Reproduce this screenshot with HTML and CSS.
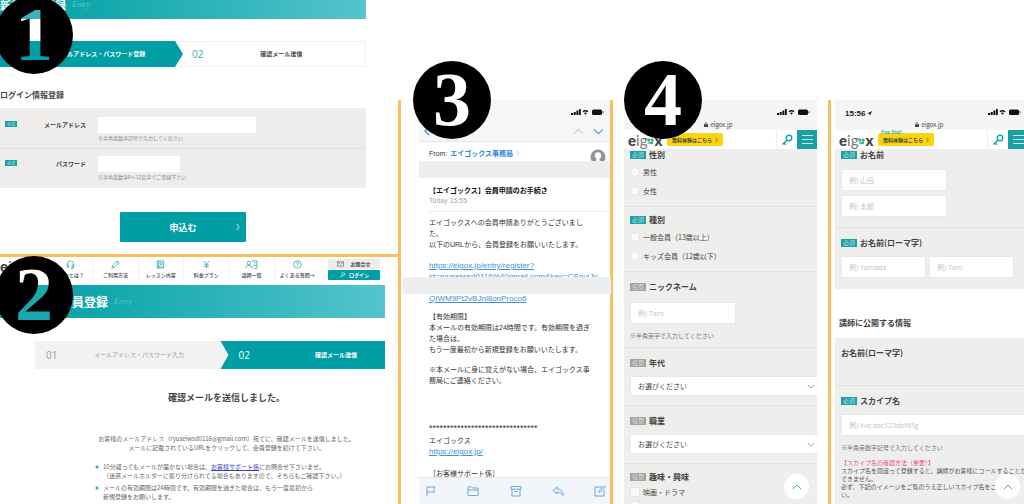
FILE: index.html
```html
<!DOCTYPE html>
<html lang="ja">
<head>
<meta charset="utf-8">
<title>エイゴックス 会員登録の流れ</title>
<link rel="stylesheet" href="styles.css">
</head>
<body>
<svg class="defs" aria-hidden="true">
  <symbol id="status" viewBox="0 0 34 8">
    <path d="M1 5h2v2H1zM3.7 4h2v3h-2zM6.4 2.600h2V7h-2zM9 1h1.800v6H9z"/>
    <path d="M12.500 3.200q3-2.400 6 0l-1 1.100q-2-1.500-4 0zM14 4.900q1.500-1 3 0L15.500 6.800z"/>
    <rect x="22" y="1.500" width="10" height="5.500" rx="1.500"/><path d="M32.600 3.200h.8v2h-.8z"/>
  </symbol>
  <symbol id="lock" viewBox="0 0 4 5"><path d="M0 2.200h4V5H0z"/><path d="M1 2.500V1.500a1 1 0 0 1 2 0v1" fill="none" stroke="currentColor" stroke-width=".6"/></symbol>
  <symbol id="key" viewBox="0 0 12 12"><g fill="none" stroke="currentColor" stroke-width="1.300"><circle cx="8" cy="4" r="2.800"/><path d="M6 6L1.500 10.500M3 9l1.700 1.700"/></g></symbol>
  <symbol id="up" viewBox="0 0 10 6"><path d="M1 5l4-4 4 4" fill="none" stroke="currentColor"/></symbol>
  <symbol id="down" viewBox="0 0 10 6"><path d="M1 1l4 4 4-4" fill="none" stroke="currentColor"/></symbol>
  <symbol id="ring" viewBox="0 0 6 6"><circle cx="1.500" cy="1.800" r="1.300" fill="#27b36a"/><circle cx="4.500" cy="1.800" r="1.300" fill="#18a8b0"/><circle cx="2.200" cy="4.200" r="1.200" fill="#7cc36b"/><circle cx="4" cy="4.200" r="1.200" fill="#18a8b0"/></symbol>
</svg>

<main class="board">
  <div class="col-web">
    <section class="web web--entry">
      <span class="num num--1">1</span>
      <header class="banner banner--cut"><h1>新規会員登録</h1><i>Entry</i></header>
      <ol class="steps steps--first">
        <li class="step step--on step--tip"><b>01</b><span>メールアドレス・パスワード登録</span></li>
        <li class="step step--next"><b>02</b><span>確認メール送信</span></li>
      </ol>
      <h2 class="login-title">ログイン情報登録</h2>
      <form class="login">
        <div class="login-row">
          <span class="tag">必須</span><label for="mail">メールアドレス</label>
          <div><input id="mail" class="w-mail" type="email"><p>※半角英数字記号で入力してください</p></div>
        </div>
        <div class="login-row">
          <span class="tag">必須</span><label for="pass">パスワード</label>
          <div><input id="pass" class="w-pass" type="password"><p>※半角英数字6〜12文字でご登録下さい</p></div>
        </div>
        <button class="apply" type="submit"><span>申込む</span><svg viewBox="0 0 4 8"><path d="M.7 1l2.500 3L.7 7" fill="none" stroke="currentColor" stroke-width=".8"/></svg></button>
      </form>
    </section>

    <section class="web web--sent">
      <span class="num num--2">2</span>
      <header class="site">
        <span class="logo"><b>e</b>ig<svg><use href="#ring"/></svg><b>x</b></span>
        <nav class="nav">
          <a href="#"><svg viewBox="0 0 10 10"><path d="M1.500 6V4.500a3.500 3.500 0 0 1 7 0V6M1.500 5.500h1.700v2.700H1.500zM6.800 5.500h1.700v2.700H6.800zM8.500 8q0 1.500-3 1.500"/></svg>eigoxとは？</a>
          <a href="#"><svg viewBox="0 0 10 10"><path d="M1 9l.6-2.600L7 1l2 2-5.400 5.400zM6 2l2 2M2 6.500l1.500 1.500"/></svg>ご利用方法</a>
          <a href="#"><svg viewBox="0 0 10 10"><path d="M1.500 1h7v8h-7zM3 1v8M4.500 3h2.500v2H4.500zM1.500 7.500h7"/></svg>レッスン内容</a>
          <a href="#"><svg viewBox="0 0 10 10"><path d="M2 1l3 4 3-4M5 5v4.500M2.500 5.300h5M2.500 7.200h5"/></svg>料金プラン</a>
          <a href="#"><svg class="wide" viewBox="0 0 14 10"><circle cx="4" cy="3.300" r="2"/><path d="M.7 9q0-3.200 3.300-3.200T7.300 9M7 1h6v5H9.500L8 7.500M9.500 3h2M13 6v3.300H9"/></svg>講師一覧</a>
          <a href="#"><svg viewBox="0 0 10 10"><circle cx="5" cy="5" r="4.200"/><path d="M3.600 4q0-1.500 1.400-1.500T6.400 4Q6.400 4.700 5 5.500v.7M5 7v.8"/></svg>よくある質問→</a>
        </nav>
        <div class="site-btns">
          <a class="ask" href="#"><svg viewBox="0 0 8 6"><path d="M.5.5h7v5h-7zl3.500 3 3.500-3" fill="none" stroke="currentColor" stroke-width=".6"/></svg>お問合せ</a>
          <a class="signin" href="#"><svg viewBox="0 0 12 12"><use href="#key"/></svg>ログイン</a>
        </div>
      </header>
      <header class="banner"><h1>新規会員登録</h1><i>Entry</i></header>
      <ol class="steps steps--second">
        <li class="step step--off"><b>01</b><span>メールアドレス・パスワード入力</span></li>
        <li class="step step--on step--notch"><b>02</b><span>確認メール送信</span></li>
      </ol>
      <h2 class="sent-title">確認メールを送信しました。</h2>
      <p class="sent-text">お客様のメールアドレス（ryuseiwsd0116@gmail.com）宛てに、確認メールを送信しました。<br>メールに記載されているURLをクリックして、会員登録を続けて下さい。</p>
      <ul class="tips">
        <li>10分経ってもメールが届かない場合は、<a href="#">お客様サポート係</a>にお問合せ下さいませ。<br>（迷惑メールホルダーに振り分けられてる場合もありますので、そちらもご確認下さい。）</li>
        <li>メールの有効期限は24時間です。有効期限を過ぎた場合は、もう一度最初から<br>新規登録をお願いします。</li>
      </ul>
    </section>
  </div>

  <section class="col-mail">
    <span class="num num--3">3</span>
    <div class="mail">
      <header class="mail-top">
        <svg class="status"><use href="#status"/></svg>
        <div class="mail-nav">
          <button class="back" aria-label="戻る"><svg viewBox="0 0 6 10"><path d="M5 1L1 5l4 4" fill="none" stroke="currentColor" stroke-width="1.500"/></svg></button>
          <button class="prev" aria-label="前へ"><svg><use href="#up"/></svg></button>
          <button aria-label="次へ"><svg><use href="#down"/></svg></button>
        </div>
      </header>
      <div class="from"><span>From:</span><a href="#">エイゴックス事務局</a><svg class="more" viewBox="0 0 4 8"><path d="M.7 1l2.500 3L.7 7" fill="none" stroke="currentColor" stroke-width=".8"/></svg>
        <svg class="face" viewBox="0 0 16 16"><circle cx="8" cy="8" r="7.500" fill="#8f949c"/><circle cx="8" cy="6.500" r="3.200" fill="#fff"/><path d="M6.500 9h3v2.500l3 1.500v2q-4.500 2-9 0v-2l3-1.500z" fill="#fff"/></svg>
      </div>
      <div class="band"></div>
      <div class="subject"><h2>【エイゴックス】会員申請のお手続き</h2><time>Today 15:55</time></div>
      <div class="letter">
        <p>エイゴックスへの会員申請ありがとうございまし<br>た。<br>以下のURLから、会員登録をお願いいたします。</p>
        <p class="url"><a href="#">https://eigox.jp/entry/register?<br>id=ryuseiwsd0116%40gmail.com&amp;key=CSnuiJy<br><br>QIWM9Pt2vBJnl8onProco6</a></p>
        <p>【有効期限】<br>本メールの有効期限は24時間です。有効期限を過ぎ<br>た場合は、<br>もう一度最初から新規登録をお願いいたします。</p>
        <p>※本メールに身に覚えがない場合、エイゴックス事<br>務局にご連絡ください。</p>
        <p class="stars">*******************************</p>
        <p class="sign">エイゴックス<br><a href="#">https://eigox.jp/</a></p>
        <p>［お客様サポート係］</p>
      </div>
      <footer class="tools">
        <button aria-label="フラグ"><svg viewBox="0 0 12 12"><path d="M2 11V2h8L8.500 4.500 10 7H2"/></svg></button>
        <button aria-label="フォルダ"><svg viewBox="0 0 12 12"><path d="M1 2.500q0-.7.700-.7H4.500l1 1.200h5q.7 0 .7.700V9.800q0 .7-.7.700H1.700Q1 10.500 1 9.800zM1 5h10.200"/></svg></button>
        <button aria-label="アーカイブ"><svg viewBox="0 0 12 12"><path d="M1 1.500h10v2.700H1zM2 4.200V11h8V4.200M4.300 6.500h3.400"/></svg></button>
        <button aria-label="返信"><svg viewBox="0 0 12 12"><path d="M5 2L.8 5.500 5 9V7q4 0 6.300 3.500Q11 4.200 5 4z"/></svg></button>
        <button aria-label="作成"><svg viewBox="0 0 12 12"><path d="M8 2H1v9h9V5M5 7.500l.3-1.800L10.200.8l1.200 1.200-4.900 4.900z"/></svg></button>
      </footer>
    </div>
    <div class="band band--key"></div>
  </section>

  <section class="col-phone col-phone--line">
    <span class="num num--4">4</span>
    <div class="phone">
      <header class="phone-top"><time></time><svg class="status"><use href="#status"/></svg><span><svg><use href="#lock"/></svg>eigox.jp</span></header>
      <div class="phone-bar">
        <span class="logo"><b>e</b>ig<svg><use href="#ring"/></svg><b>x</b></span>
        <a class="trial" href="#">無料体験はこちら<svg viewBox="0 0 4 8"><path d="M.7 1l2.500 3L.7 7" fill="none" stroke="currentColor" stroke-width=".8"/></svg></a>
        <a class="keylink" href="#" aria-label="ログイン"><svg><use href="#key"/></svg></a>
        <button class="menu" aria-label="メニュー"><i></i><i></i><i></i></button>
      </div>
      <form>
        <div class="field field--top" role="radiogroup" aria-labelledby="g1">
          <h3 id="g1"><span class="tag">必須</span>性別</h3>
          <div class="choices"><label><input type="radio" name="sex">男性</label><label><input type="radio" name="sex">女性</label></div>
        </div>
        <div class="field field--choice" role="radiogroup" aria-labelledby="g2">
          <h3 id="g2"><span class="tag">必須</span>種別</h3>
          <div class="choices"><label><input type="radio" name="kind">一般会員（13歳以上）</label><label><input type="radio" name="kind">キッズ会員（12歳以下）</label></div>
        </div>
        <div class="field">
          <h3><span class="tag tag--any">任意</span><label for="nick">ニックネーム</label></h3>
          <div class="inputs"><input id="nick" class="w-name" placeholder="例) Taro"></div>
          <p class="note">※半角英字で入力してください</p>
        </div>
        <div class="field field--select">
          <h3><span class="tag tag--any">任意</span><label for="age">年代</label></h3>
          <div class="pick"><select id="age"><option>お選びください</option></select><svg><use href="#down"/></svg></div>
        </div>
        <div class="field field--select">
          <h3><span class="tag tag--any">任意</span><label for="job">職業</label></h3>
          <div class="pick"><select id="job"><option>お選びください</option></select><svg><use href="#down"/></svg></div>
        </div>
        <div class="field field--choice">
          <h3><span class="tag tag--any">任意</span>趣味・興味</h3>
          <div class="choices choices--tick"><label><input type="checkbox">映画・ドラマ</label><label><input type="checkbox" aria-label="その他"></label></div>
        </div>
      </form>
      <a class="totop" href="#" aria-label="先頭へ"><svg><use href="#up"/></svg></a>
    </div>
  </section>

  <section class="col-phone">
    <div class="phone phone--over">
      <header class="phone-top"><time>15:56 <svg viewBox="0 0 6 6"><path d="M0 3L6 0 3.500 6 3 3.200z"/></svg></time><svg class="status"><use href="#status"/></svg><span><svg><use href="#lock"/></svg>eigox.jp</span></header>
      <div class="phone-bar">
        <span class="logo"><b>e</b>ig<svg><use href="#ring"/></svg><b>x</b></span>
        <a class="trial" href="#"><i>Free Trial!</i>無料体験はこちら<svg viewBox="0 0 4 8"><path d="M.7 1l2.500 3L.7 7" fill="none" stroke="currentColor" stroke-width=".8"/></svg></a>
        <a class="keylink" href="#" aria-label="ログイン"><svg><use href="#key"/></svg></a>
        <button class="menu" aria-label="メニュー"><i></i><i></i><i></i></button>
      </div>
      <form>
        <div class="field field--top field--names">
          <h3><span class="tag">必須</span><label for="sei">お名前</label></h3>
          <div class="inputs inputs--stack"><input id="sei" class="w-name" placeholder="例) 山田"><input class="w-name" aria-label="名" placeholder="例) 太郎"></div>
        </div>
        <div class="field field--last">
          <h3><span class="tag">必須</span><label for="rsei">お名前(ローマ字)</label></h3>
          <div class="inputs"><input id="rsei" placeholder="例) Yamada"><input aria-label="名(ローマ字)" placeholder="例) Taro"></div>
        </div>
        <h2 class="public">講師に公開する情報</h2>
        <div class="field field--blank"><h3>お名前(ローマ字)</h3></div>
        <div class="field field--skype">
          <h3><span class="tag">必須</span><label for="skype">スカイプ名</label></h3>
          <div class="inputs"><input id="skype" placeholder="例) live:abc123def45g"></div>
          <p class="note">※半角英数字記号で入力してください</p>
          <p class="help"><em>【スカイプ名の確認方法（重要）】</em><br>スカイプ名を間違って登録すると、講師がお客様にコールすることが<br>できません。<br>必ず、下記のイメージをご覧のうえ正しいスカイプ名をご<br>い。</p>
        </div>
      </form>
      <a class="totop" href="#" aria-label="先頭へ"><svg><use href="#up"/></svg></a>
    </div>
  </section>
</main>
</body>
</html>
```
FILE: styles.css
```css
* { box-sizing: border-box; margin: 0; padding: 0; }
:root { --teal: #009fa6; --orange: #fbbd62; --form: #eeeeec; }
body {
  font-family: "Noto Sans CJK JP", sans-serif;
  color: #444;
  background: #fff;
  overflow: hidden;
}
ol, ul { list-style: none; }
i, em { font-style: normal; }
a { color: inherit; text-decoration: none; }
button, input, select { font: inherit; color: inherit; border: 0; background: none; appearance: none; }
svg { display: block; fill: currentColor; flex: none; }
.defs { position: absolute; width: 0; height: 0; }

.board {
  display: grid;
  grid-template-columns: 398fr 215fr 218fr 193fr;
  height: 100vh;
  overflow: hidden;
}
.board > * { min-width: 0; }

/* numbered discs */
.num {
  position: absolute;
  z-index: 5;
  width: 78px;
  height: 78px;
  border-radius: 50%;
  background: #000;
  font: bold 76px/76px "Liberation Serif", serif;
  text-align: center;
  color: #fff;
}
.num--1, .num--2 { color: transparent; -webkit-text-fill-color: transparent; }
.num--1 {
  top: -4px; left: -5px;
  background: linear-gradient(#3bb4b9 23px, #fff 23px 45px, var(--teal) 45px) text, #000;
}
.num--2 {
  top: -1px; left: -5px;
  background: linear-gradient(#fff 29px, #17a9ae 29px) text, #000;
}
.num--3 { top: -39px; left: 12px; }
.num--4 { top: -39px; left: 11px; }

/* web pages on the left */
.web { position: relative; }
.web--entry { height: 257px; border-bottom: 3px solid var(--orange); padding-right: 32px; overflow: hidden; }
.web--sent { padding-right: 13px; }
.banner {
  display: flex;
  align-items: center;
  gap: 6px;
  height: 33px;
  padding-left: 36px;
  color: #fff;
  background: linear-gradient(90deg, #0fa7ac 25%, #55c4cc);
}
.banner h1 { font-size: 12px; line-height: 16px; }
.banner i { font: italic 8px/10px "Liberation Serif", serif; color: #5cc5ca; }
.banner--cut { height: 19px; padding: 0 0 10px; }
.banner--cut h1 { font-size: 11px; }

.steps { display: flex; font-size: 6px; line-height: 10px; }
.step { display: flex; align-items: center; }
.step b { font: 10px/12px "Open Sans", sans-serif; }
.step span { flex: 1; text-align: center; }
.step--on { background: var(--teal); color: #fff; font-weight: 700; }
.steps--first { height: 26px; margin-top: 22px; }
.step--tip { flex: 0 0 50%; padding: 0 4px 0 10px; clip-path: polygon(0 0, calc(100% - 8px) 0, 100% 50%, calc(100% - 8px) 100%, 0 100%); }
.step--next { flex: 1; margin-left: -8px; padding: 0 16px; border: 1px solid #f1f1f1; font-weight: 700; }
.step--next b { color: #35aeb3; }
.step--next span { padding-left: 10px; }
.steps--second { height: 28px; margin: 23px 0 0 35px; }
.step--off { flex: 1; margin-right: -8px; padding: 0 8px 0 11px; background: #f2f2f2; color: #999; }
.step--notch { flex: 0 0 47%; padding: 0 18px; clip-path: polygon(0 0, 100% 0, 100% 100%, 0 100%, 8px 50%); }
.step--notch span { text-align: right; padding-right: 10px; }

.login-title { margin-top: 22px; font-size: 8px; line-height: 12px; font-weight: 700; margin-bottom: 7px; }
.login { display: flex; flex-direction: column; }
.login-row {
  display: grid;
  grid-template-columns: 12px 69px 1fr;
  height: 40px;
  padding: 9px 0 0 5px;
  background: #eeedec;
  font-size: 6px;
}
.login-row + .login-row { border-top: 1px solid #e2e2e1; padding-top: 7px; }
.login-row > label { text-align: right; line-height: 15px; font-weight: 700; }
.login-row > div { padding-left: 12px; }
.login-row input { display: block; height: 16px; background: #fff; }
.login-row p { font-size: 5px; line-height: 8px; margin-top: 1px; color: #888; }
.login-row .tag { width: 12px; height: 6px; line-height: 6px; font-size: 4px; margin-top: 4px; }
.w-mail { width: 158px; }
.w-pass { width: 82px; }
.tag {
  display: inline-block;
  width: 16px;
  height: 8px;
  background: #1a9fa5;
  color: #b5e2e4;
  font-size: 6px;
  line-height: 8px;
  font-weight: 400;
  text-align: center;
}
.tag--any { background: #a3a3a2; color: #ddd; }
.apply {
  display: flex;
  align-items: center;
  align-self: center;
  width: 126px;
  height: 30px;
  margin-top: 24px;
  padding: 0 6px 0 10px;
  border-radius: 1px;
  background: var(--teal);
  color: #fff;
  font-size: 9px;
  font-weight: 700;
}
.apply span { flex: 1; }
.apply svg { width: 4px; height: 8px; }

.logo { display: flex; align-items: center; font: 15px/18px Lato, sans-serif; color: #777; }
.logo b { color: #444; font-weight: 900; }
.logo svg { width: 7px; height: 7px; margin-top: 3px; }
.site { display: flex; align-items: flex-start; height: 28px; padding-right: 5px; gap: 8px; }
.site .logo { flex: 0 0 40px; }
.nav { flex: 1; display: grid; grid-template-columns: repeat(6, 1fr); font-size: 5px; line-height: 8px; font-weight: 500; }
.nav a { display: flex; flex-direction: column; align-items: center; gap: 2px; height: 25px; padding-top: 3px; border-right: 1px solid #f3f3f3; white-space: nowrap; }
.nav a:last-child { border: 0; }
.nav svg { width: 9px; height: 9px; fill: none; stroke: #36aeb3; stroke-width: .9; }
.nav .wide { width: 13px; }
.site-btns { flex: 0 0 52px; display: flex; flex-direction: column; gap: 1px; padding-top: 2px; font-size: 5px; line-height: 10px; }
.site-btns a { display: flex; justify-content: center; align-items: center; gap: 6px; height: 10px; border-radius: 1px; font-weight: 700; }
.site-btns svg { width: 7px; height: 6px; }
.site-btns .signin { gap: 3px; }
.ask { background: #efedec; }
.signin { background: var(--teal); color: #fff; }

.sent-title { margin: 22px 0 0 68px; text-align: center; font-size: 9px; line-height: 14px; }
.sent-text { margin: 29px 0 0 68px; text-align: center; font-size: 6px; line-height: 9px; color: #666; white-space: nowrap; }
.tips { margin: 10px 0 0 95px; font-size: 6px; line-height: 9px; color: #666; white-space: nowrap; }
.tips li { padding-left: 8px; margin-bottom: 3px; background: radial-gradient(circle at 2px 5px, #36aeb3 1px, transparent 2px); }
.tips a { color: #3a3ac0; text-decoration: underline; }

/* mail */
.col-mail { position: relative; margin-top: 100px; padding-left: 18px; border: solid var(--orange); border-width: 0 3px; }
.mail { display: flex; flex-direction: column; height: calc(100vh - 100px); font-family: "Liberation Sans", "Noto Sans CJK JP", sans-serif; font-size: 7px; line-height: 11px; color: #333; white-space: nowrap; overflow: hidden; }
.mail-top { flex: none; height: 42px; padding: 8px 6px 0 5px; background: #f6f6f7; border-bottom: 1px solid #e6e6e8; }
.status { width: 34px; height: 8px; margin-left: auto; color: #111; }
.mail-nav { display: flex; align-items: center; gap: 9px; height: 14px; margin-top: 8px; color: #4d9be8; }
.mail-nav .back { margin-right: auto; }
.mail-nav .prev { color: #ccc; }
.mail-nav svg { width: 11px; height: 7px; }
.mail-nav .back svg { height: 10px; width: 6px; }
.from { flex: none; display: flex; align-items: center; height: 19px; padding: 4px 4px 0 10px; overflow: hidden; gap: 3px; }
.from a { color: #2f86e0; font-weight: 700; }
.from .more { width: 4px; height: 7px; color: #bbb; }
.from .face { width: 16px; height: 16px; margin: 3px 0 0 auto; align-self: flex-start; }
.band { flex: none; height: 17px; background: #eceef0; }
.band--key { position: absolute; top: 177px; left: 2px; right: -1px; }
.subject { flex: none; margin: 0 0 0 10px; padding: 7px 0 5px; border-bottom: 1px solid #ececec; }
.subject h2 { font-size: 7px; line-height: 11px; color: #111; }
.subject time { display: block; line-height: 10px; color: #aaa; }
.letter { flex: 1; min-height: 0; overflow: hidden; padding: 5px 0 0 10px; }
.letter p { margin-bottom: 9px; }
.letter a { color: #3f8fdb; text-decoration: underline; font-size: 8px; }
.letter .url { font-size: 8px; margin-bottom: 7px; margin-top: 10px; }
.letter .stars { font-size: 9px; margin: 37px 0 1px; line-height: 11px; }
.letter .sign { margin-bottom: 11px; }
.tools { flex: none; display: flex; justify-content: space-between; align-items: center; height: 27px; padding: 0 4px 0 6px; background: #f2f5fa; border-top: 1px solid #e5e8ec; }
.tools svg { width: 12px; height: 12px; fill: none; stroke: #5c9fdc; stroke-width: .9; }

/* phones */
.col-phone { position: relative; margin-top: 100px; padding-left: 4px; }
.col-phone--line { padding: 0 11px; border-right: 3px solid var(--orange); }
.phone { position: relative; height: calc(100vh - 100px); background: var(--form); overflow: hidden; }
.phone--over { margin-right: -4px; }
.phone-top { display: grid; grid-template-columns: 1fr auto; height: 30px; padding: 8px 7px 0 10px; background: #f5f5f5; font-size: 6px; }
.phone-top time { display: flex; gap: 2px; align-items: center; font: bold 8px/9px "Liberation Sans", sans-serif; color: #222; }
.phone-top time svg { width: 5px; height: 5px; }
.phone-top span { grid-column: 1 / 3; display: flex; justify-content: center; align-items: center; gap: 3px; padding-right: 8px; font-family: "Noto Sans CJK JP", sans-serif; line-height: 8px; color: #444; }
.phone-top span svg { width: 4px; height: 5px; }
.phone-bar { display: flex; align-items: center; height: 19px; padding-left: 4px; background: #fff; }
.phone-bar .logo { width: 39px; }
.trial { position: relative; display: flex; justify-content: center; align-items: center; gap: 3px; width: 56px; height: 13px; border-radius: 2px; background: #fbd40f; font-size: 5px; line-height: 13px; font-weight: 700; white-space: nowrap; }
.trial svg { width: 3px; height: 6px; }
.trial i { position: absolute; top: -3px; left: 3px; font: italic bold 5px/5px Lato, sans-serif; color: #2aa7a0; }
.keylink { display: flex; justify-content: center; align-items: center; width: 21px; height: 19px; margin-left: auto; border-left: 1px solid #eee; color: var(--teal); }
.keylink svg { width: 12px; height: 12px; }
.menu { display: flex; flex-direction: column; justify-content: center; align-items: center; gap: 3px; width: 20px; height: 19px; background: #18a0a5; }
.menu i { width: 11px; height: 1px; background: #c5e8e9; }

.field { padding: 10px 7px 6px 6px; border-bottom: 1px solid #e2e2e0; }
.field h3 { display: flex; align-items: center; gap: 3px; height: 10px; font-size: 8px; line-height: 10px; white-space: nowrap; }
.field--top { padding-top: 1px; }
.field--choice { padding-top: 8px; }
.choices { margin-top: 2px; font-size: 7px; line-height: 10px; }
.choices label { display: flex; align-items: center; gap: 3px; height: 19px; }
.choices input { width: 10px; height: 10px; border-radius: 50%; background: #fafafa; border: 1px solid #e4e4e3; }
.choices--tick { margin-top: 3px; }
.choices--tick label { height: 14px; }
.choices--tick input { border-radius: 0; }
.inputs { display: flex; gap: 3px; margin-top: 10px; }
.inputs input { flex: 1; min-width: 0; height: 22px; padding: 0 7px; background: #fff; border: 1px solid #e8e8e7; font: 7px "Open Sans", "Noto Sans CJK JP", sans-serif; }
.inputs input::placeholder { color: #c4c4c4; }
.inputs .w-name { flex: none; width: 106px; }
.inputs--stack { flex-direction: column; gap: 4px; margin-top: 9px; }
.note { margin-top: 7px; font-size: 6px; line-height: 10px; color: #777; }
.field--select { padding-right: 0; padding-bottom: 9px; }
.pick { display: grid; align-items: center; margin-top: 8px; background: #fff; border: 1px solid #e8e8e7; border-right: 0; }
.pick > * { grid-area: 1 / 1; }
.pick select { height: 18px; padding: 0 7px; font-size: 7px; line-height: 16px; }
.pick svg { width: 8px; height: 5px; margin: 0 2px 0 auto; color: #888; pointer-events: none; }
.field--names { padding-bottom: 10px; }
.field--last { padding-bottom: 11px; padding-right: 14px; border: 0; }
.field--last .inputs, .field--skype .inputs { margin-top: 8px; }
.public { padding: 29px 4px 10px; background: #fff; font-size: 8px; line-height: 10px; }
.field--blank { padding-bottom: 27px; }
.field--skype { padding-right: 0; white-space: nowrap; }
.help { margin-top: 6px; font-size: 6px; line-height: 8px; color: #555; }
.help em { color: #e8508c; }
.totop { position: absolute; right: 8px; bottom: 5px; display: flex; justify-content: center; align-items: center; width: 25px; height: 25px; border-radius: 50%; background: #fff; color: #36aeb3; }
.totop svg { width: 10px; height: 6px; }
```
